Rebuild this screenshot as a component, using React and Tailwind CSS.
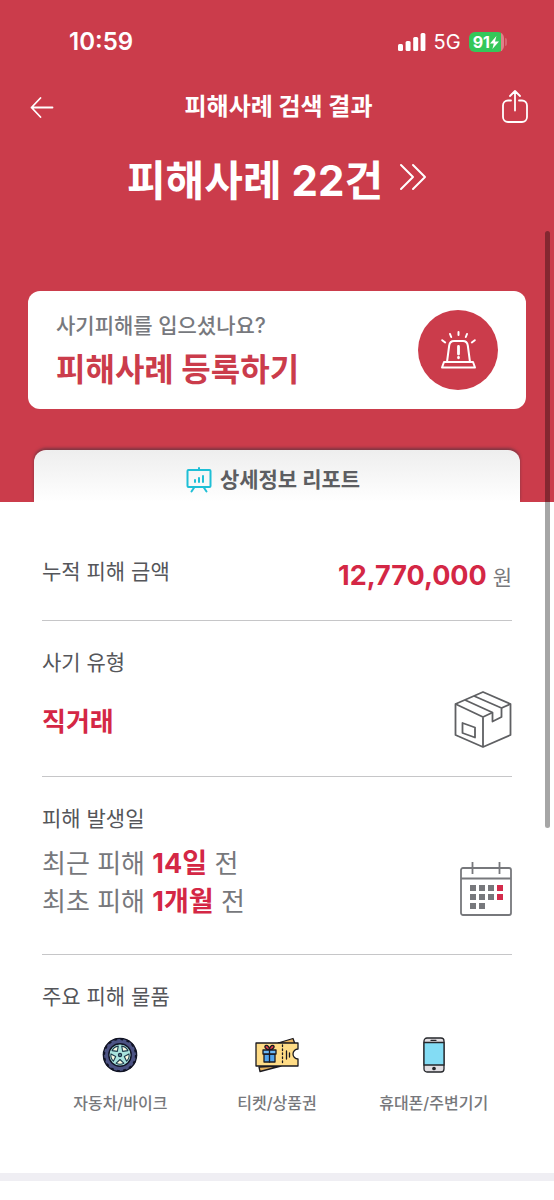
function StatusBar() {
  return (
    <div className="flex items-center justify-between pl-[69px] pr-[47px] pt-[26px]">
      <span className="text-2xl leading-8 font-semibold">10:59</span>
      <div className="flex items-center">
        <svg width="28" height="18" viewBox="0 0 28 18" fill="currentColor" aria-hidden="true">
          <rect x="0" y="11" width="5" height="7" rx="1.5" />
          <rect x="7.6" y="8" width="5" height="10" rx="1.5" />
          <rect x="15.2" y="4" width="5" height="14" rx="1.5" />
          <rect x="22.6" y="0" width="4.8" height="18" rx="1.5" />
        </svg>
        <span className="ml-2 text-xl leading-8">5G</span>
        <div className="ml-2 flex h-5 items-center rounded-md bg-linear-to-r from-[#34c759] from-92% to-[#e08089] to-92% pl-1 pr-[5px]">
          <span className="text-base leading-5 font-bold">91</span>
          <svg width="9" height="13" viewBox="0 0 9 13" fill="currentColor" aria-hidden="true">
            <path d="M6.4 0 0 7.4h3.8L2.4 13 9 5.4H5z" />
          </svg>
        </div>
        <span className="ml-px h-2 w-0.5 rounded-r-full bg-[#e08089]/60" />
      </div>
    </div>
  );
}

function Header() {
  return (
    <header className="flex items-center justify-between pl-7 pr-[25px] pt-[29px]">
      <button type="button" aria-label="뒤로" className="flex h-10 w-7 items-center justify-center">
        <svg width="24" height="24" viewBox="0 0 24 24" fill="none" stroke="currentColor" strokeWidth="1.8" strokeLinecap="round" strokeLinejoin="round">
          <path d="M22.5 12.5H1.500M10.500 3 1.500 12.500l9 9.500" />
        </svg>
      </button>
      <h1 className="text-2xl leading-8 font-bold">피해사례 검색 결과</h1>
      <button type="button" aria-label="공유" className="flex h-10 w-7 items-center justify-center">
        <svg width="28" height="34" viewBox="0 0 28 34" fill="none" stroke="currentColor" strokeWidth="1.8" strokeLinecap="round" strokeLinejoin="round">
          <path d="M10 10.500H7a5 5 0 0 0-5 5v11.500a5 5 0 0 0 5 5h14a5 5 0 0 0 5-5V15.500a5 5 0 0 0-5-5h-3M14 20.500V1M9 6l5-5 5 5" />
        </svg>
      </button>
    </header>
  );
}

function SirenIcon() {
  return (
    <svg width="37" height="38" viewBox="0 0 37 38" fill="none" stroke="currentColor" strokeWidth="2" strokeLinecap="round" strokeLinejoin="round" aria-hidden="true">
      <path d="M7 31 9.200 14.500c.5-3.200 1.800-4.500 4.800-4.500h9c3 0 4.300 1.300 4.800 4.500L30 31M4 31h29l2 5.500H2z" />
      <path d="M18.500 1v3M10 3l1.200 3M27 3l-1.200 3M2.200 9.200l3 2.300M34.800 9.200l-3 2.300" />
      <path d="M18.500 15.500v7.500M18.500 26.500v.3" strokeWidth="2.800" />
    </svg>
  );
}

function ReportIcon() {
  return (
    <svg width="26" height="26" viewBox="0 0 26 26" fill="none" stroke="#1fbfd6" strokeWidth="2" strokeLinecap="round" strokeLinejoin="round" aria-hidden="true">
      <rect x="1.5" y="3" width="23" height="17" rx="1" />
      <path d="M13 1v2M8.500 20 5.500 24.500M17.500 20l3 4.500" />
      <path d="M9 13v2M13 11v4M17 9v6" />
    </svg>
  );
}

function BoxIcon() {
  return (
    <svg width="58" height="58" viewBox="0 0 58 58" fill="none" stroke="#5f6063" strokeWidth="1.8" strokeLinejoin="round" aria-hidden="true">
      <path d="M1.500 13 29 1l27.500 12v31L29 56 1.500 44z" />
      <path d="M1.500 13 29 26l9.500-4.500M47.500 17l9-4M29 26v30" />
      <path d="M11 9 38.500 21.500v9l9-4.500v-9L20 5" />
      <path d="M8.500 32 21 36.500v10L8.500 42z" />
    </svg>
  );
}

const days = [
  [10, 24], [19, 24], [28, 24], [37, 24, true],
  [10, 33], [19, 33], [28, 33], [37, 33, true],
  [10, 42], [19, 42],
];

function CalendarIcon() {
  return (
    <svg width="52" height="56" viewBox="0 0 52 56" fill="none" className="mb-1" aria-hidden="true">
      <rect x="1" y="7" width="50" height="47" rx="2" stroke="#77787c" strokeWidth="1.8" />
      <path d="M1 17.500h50M12.500 1v12M39.500 1v12" stroke="#77787c" strokeWidth="1.8" />
      {days.map(([x, y, hit]) => (
        <rect key={`${x}-${y}`} x={x} y={y} width="6" height="6" fill={hit ? "#d42b4b" : "#77787c"} />
      ))}
    </svg>
  );
}

function WheelIcon() {
  return (
    <svg width="36" height="36" viewBox="0 0 36 36" aria-hidden="true">
      <circle cx="18" cy="18" r="16.6" fill="#4c5384" stroke="#111425" strokeWidth="1.4" />
      <circle cx="18" cy="18" r="16" fill="none" stroke="#111425" strokeWidth="2.2" strokeDasharray="2.8 3.483" />
      <circle cx="18" cy="18" r="11.2" fill="#a9e3dd" stroke="#111425" strokeWidth="1.4" />
      {/* openings between the five spokes */}
      {[36, 108, 180, 252, 324].map((deg) => (
        <path
          key={deg}
          transform={`rotate(${deg} 18 18)`}
          d="M18 13.500 14.200 9.800c2.200-1.200 5.400-1.200 7.600 0z"
          fill="#fafbe2"
          stroke="#1c3a4c"
          strokeWidth="1.1"
          strokeLinejoin="round"
        />
      ))}
      <circle cx="18" cy="18" r="2.2" fill="#1c2f45" />
      <circle cx="18" cy="18" r=".8" fill="#7fd0d2" />
    </svg>
  );
}

function TicketIcon() {
  return (
    <svg width="44" height="36" viewBox="0 0 44 36" stroke="#1b1a20" strokeWidth="1.3" strokeLinejoin="round" strokeLinecap="round" aria-hidden="true">
      <path d="m4 30 1 4.500L26 29zM23 6 38 1.500 40 7z" fill="#e9b45f" />
      <path d="M1 6h42v6a5 5 0 0 0 0 10v7H1z" fill="#ffdc86" />
      <path d="M27.500 8v19" strokeDasharray="1.5 2.5" fill="none" />
      <path d="M31.500 14v8M34.500 16v4" fill="none" />
      <path d="M14.500 13c-4 0-6-4-3.500-4.500 2-.3 3.500 2 3.500 4.500zM14.500 13c4 0 6-4 3.500-4.500-2-.3-3.500 2-3.500 4.500z" fill="#e0404e" />
      <path d="M9 17h11v8H9z" fill="#52a5ed" />
      <path d="M8 13h13v4H8z" fill="#6cb9f5" />
      <path d="M14.500 13v12" />
    </svg>
  );
}

function PhoneIcon() {
  return (
    <svg width="22" height="36" viewBox="0 0 22 36" stroke="#25272b" strokeWidth="1.3" aria-hidden="true">
      <rect x="1" y="1" width="20" height="34" rx="3" fill="#e2dfe3" />
      <path d="M1 5.500h20v22.500H1z" fill="#83dcf4" />
      <path d="M8 3.300h5" strokeLinecap="round" />
      <circle cx="11" cy="31.500" r="1.2" fill="#25272b" />
    </svg>
  );
}

const items = [
  { name: "자동차/바이크", Icon: WheelIcon },
  { name: "티켓/상품권", Icon: TicketIcon },
  { name: "휴대폰/주변기기", Icon: PhoneIcon },
];

export default function App() {
  return (
    <div className="relative min-h-screen bg-white font-['Inter','Noto_Sans_CJK_KR',sans-serif] text-[#55565a]">
      <div className="bg-[#cb3c4b] text-white">
        <StatusBar />
        <Header />

        <a href="#cases" className="mt-6 flex items-center justify-center gap-4">
          <span className="text-[42px] leading-[60px] font-bold">피해사례 22건</span>
          <svg width="28" height="28" viewBox="0 0 28 28" fill="none" stroke="currentColor" strokeWidth="2" strokeLinecap="round" strokeLinejoin="round" className="mb-2" aria-hidden="true">
            <path d="M2 2l12 12L2 26M14 2l12 12-12 12" />
          </svg>
        </a>

        <a href="#register" className="mx-7 mt-20 flex items-center justify-between rounded-xl bg-white px-7 py-[19px]">
          <div>
            <p className="text-[21px] leading-8 font-medium text-[#77797e]">사기피해를 입으셨나요?</p>
            <p className="pt-2 text-[32px] leading-10 font-bold text-[#cb3c4b]">피해사례 등록하기</p>
          </div>
          <span className="flex size-20 items-center justify-center rounded-full bg-[#cb3c4b] text-white">
            <SirenIcon />
          </span>
        </a>

        <div className="px-[34px] pt-[41px]">
          <h2 className="flex items-center justify-center gap-2 rounded-t-xl bg-linear-to-b from-[#eeeeee] to-white pt-3.5 pb-1.5 pr-2 text-[21px] leading-8 font-bold text-[#5d5e62] shadow-[0_-2px_3px_rgba(60,50,60,0.55)]">
            <ReportIcon />
            상세정보 리포트
          </h2>
        </div>
      </div>

      <main className="relative bg-white px-[42px] text-[21px] leading-8">
        <section className="flex items-start justify-between border-b border-[#c6c6c8] pt-[54px] pb-[26px]">
          <h3>누적 피해 금액</h3>
          <p className="pt-1 text-[#77787c]">
            <strong className="text-[27px] font-bold text-[#d42745]">12,770,000</strong> 원
          </p>
        </section>

        <section className="flex items-end justify-between border-b border-[#c6c6c8] pt-[26px] pb-[27px]">
          <div>
            <h3>사기 유형</h3>
            <p className="mt-6 mb-2 text-[26px] leading-[38px] font-bold text-[#d42745]">직거래</p>
          </div>
          <BoxIcon />
        </section>

        <section className="flex items-end justify-between border-b border-[#c6c6c8] pt-[26px] pb-[33px]">
          <div>
            <h3>피해 발생일</h3>
            <p className="mt-2.5 text-[26px] leading-[38px] text-[#77787c]">
              최근 피해 <strong className="text-[27px] font-bold text-[#d42745]">14일</strong> 전
            </p>
            <p className="text-[26px] leading-[38px] text-[#77787c]">
              최초 피해 <strong className="text-[27px] font-bold text-[#d42745]">1개월</strong> 전
            </p>
          </div>
          <CalendarIcon />
        </section>

        <section className="pt-[26px] pb-[58px]">
          <h3>주요 피해 물품</h3>
          <ul className="mt-6 grid grid-cols-3">
            {items.map(({ name, Icon }) => (
              <li key={name} className="flex flex-col items-center">
                <Icon />
                <span className="mt-[18px] text-base leading-6 font-medium text-[#77787c]">{name}</span>
              </li>
            ))}
          </ul>
        </section>
      </main>

      <div className="h-2 bg-[#efeef3]" />

      {/* scroll indicator */}
      <div className="absolute top-[231px] right-1 h-[597px] w-[5px] rounded-full bg-black/35" />
    </div>
  );
}
